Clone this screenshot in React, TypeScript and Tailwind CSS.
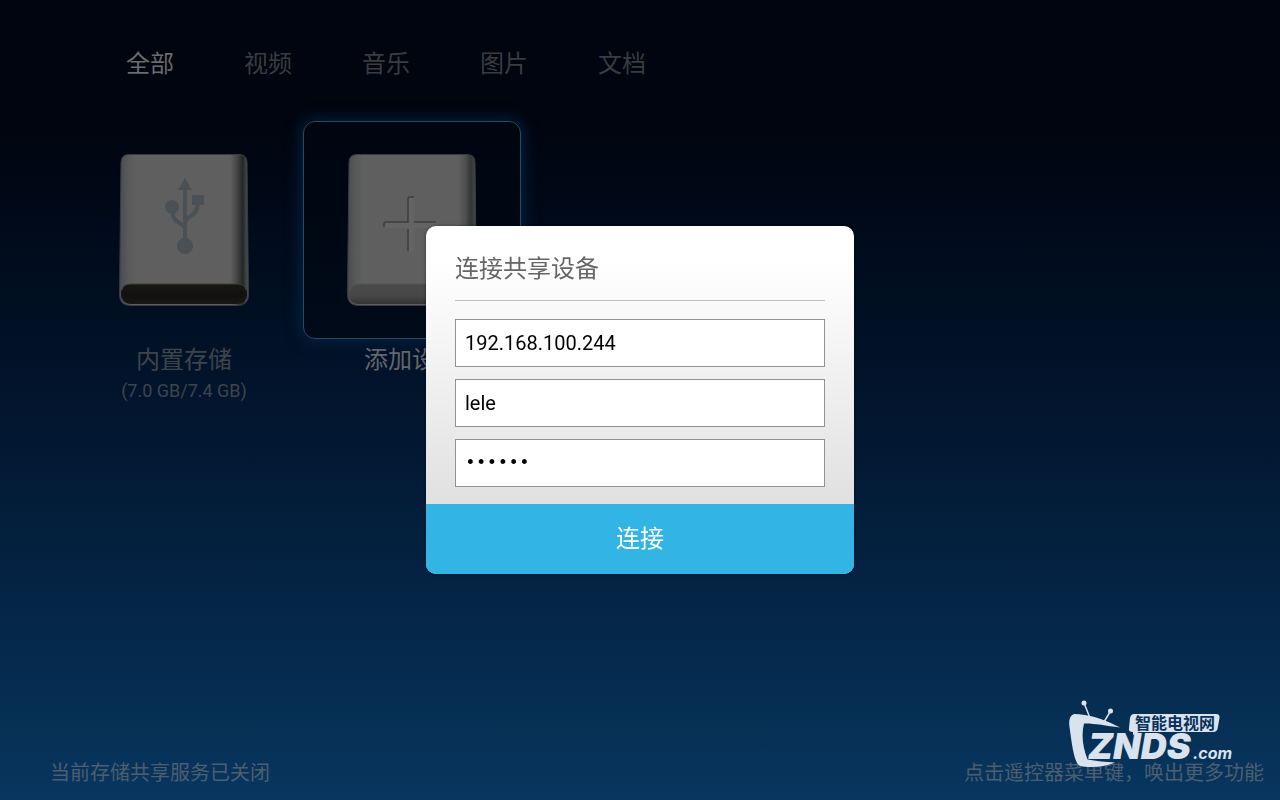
import { useState } from "react";

const tabs = ["全部", "视频", "音乐", "图片", "文档"];

function DriveBody({ id, dark }: { id: string; dark?: boolean }) {
  return (
    <>
      <defs>
        <linearGradient id={`${id}-face`} x1="0" x2="1" y1="0" y2="0">
          <stop offset="0" stopColor="#484b52" />
          <stop offset="0.06" stopColor="#575859" />
          <stop offset="0.12" stopColor="#5f5f5f" />
          <stop offset="0.86" stopColor="#5f5f5f" />
          <stop offset="0.91" stopColor={dark ? "#454645" : "#505050"} />
          <stop offset="0.955" stopColor={dark ? "#232827" : "#333736"} />
          <stop offset="0.98" stopColor="#3c403f" />
          <stop offset="1" stopColor="#505252" />
        </linearGradient>
        <linearGradient id={`${id}-lip`} x1="0" x2="0" y1="0" y2="1">
          <stop offset="0" stopColor={dark ? "#181714" : "#4a4a4a"} />
          <stop offset="0.6" stopColor={dark ? "#12110f" : "#474747"} />
          <stop offset="1" stopColor={dark ? "#171716" : "#333333"} />
        </linearGradient>
      </defs>
      <path
        d="M10 .5h110q8 0 8 8l1.5 132q0 11-11 11h-107q-11 0-11-11L2 8.5q0-8 8-8z"
        fill={`url(#${id}-face)`}
        stroke="#383c40"
      />
      <rect x="2" y="130" width="126" height="20" rx="9" fill={`url(#${id}-lip)`} />
      <path d="M3 136q1-6 8-6h108q7 0 8 6" fill="none" stroke={dark ? "#3d3d3b" : "#555555"} />
    </>
  );
}

function UsbDrive() {
  return (
    <svg viewBox="0 0 130 152" className="h-[152px] w-[130px]" aria-hidden="true">
      <DriveBody id="usb" dark />
      <g fill="#4b5054" stroke="#4b5054">
        <path d="M66 24l7 12H59z" stroke="none" />
        <path d="M66 34v54M66 75c-1-7-12-5-13-18M66 68c2-7 12-5 13-19" fill="none" strokeWidth="4" />
        <circle cx="66" cy="92" r="8" stroke="none" />
        <circle cx="53" cy="53" r="7" stroke="none" />
        <path d="M73 41h12v10H73z" stroke="none" />
      </g>
    </svg>
  );
}

function AddDrive() {
  return (
    <svg viewBox="0 0 130 152" className="h-[152px] w-[130px]" aria-hidden="true">
      <DriveBody id="add" />
      <path
        d="M61 45q0-2 2-2h2q2 0 2 2v23h22q2 0 2 2v2q0 2-2 2H67v22q0 2-2 2h-2q-2 0-2-2V74H39q-2 0-2-2v-2q0-2 2-2h22z"
        fill="#646464"
      />
      <path d="M67 43h-4q-2 0-2 2v23H39q-2 0-2 2v3M67 68h22M61 75v22" fill="none" stroke="#3e3e3e" strokeWidth="1.5" />
    </svg>
  );
}

function Watermark() {
  return (
    <svg viewBox="0 0 170 72" className="h-[72px] w-[170px]" role="img" aria-label="智能电视网 ZNDS.com">
      <g fill="#d9e3ed">
        <circle cx="16" cy="3" r="2.5" />
        <circle cx="42.5" cy="11" r="2.5" />
        <path d="M16 3L22 18M42.500 11L36 22" stroke="#d9e3ed" strokeWidth="1.5" />
        <path d="M6 14C20 14 36 19 52 27.500C37 25.500 24 23 16 23.500C13 36 15 48 19.500 59.500C28 61 38 62 47 62.500C37 67 22 68 12 66C6 63 4 45 1.500 27Q0 16 6 14z" />
        <path d="M66 14h82q4 0 3.500 4l-2 11q-1 3-4 3H71l-6 3v-3q-5 0-4-4l1-10q1-4 4-4z" />
        <text x="20" y="59" className="font-['Inter'] text-[36px] font-black italic">
          ZNDS
        </text>
        <text x="125" y="59" className="font-['Inter'] text-[16px] font-bold italic">
          .com
        </text>
      </g>
      <text x="67" y="29" fill="#0a315b" className="font-['Noto_Sans_CJK_SC',sans-serif] text-[16px] font-bold">
        智能电视网
      </text>
    </svg>
  );
}

const fieldClass = "block h-12 w-full border border-[#929292] bg-white px-[9px] pb-px text-black outline-none";
const textFont = "font-['Roboto','Noto_Sans_CJK_SC',sans-serif] text-[20px]";
const secretFont = "font-['Liberation_Mono',monospace] text-[18px]";

export default function App() {
  const [active, setActive] = useState(0);
  const [address, setAddress] = useState("192.168.100.244");
  const [user, setUser] = useState("lele");
  const [password, setPassword] = useState("123456");

  return (
    <div className="relative flex min-h-screen flex-col bg-linear-to-b from-[#00050f] from-15% via-[#02152d] via-50% to-[#08365f] font-['Roboto','Noto_Sans_CJK_SC',sans-serif]">
      <nav className="flex gap-[70px] pt-12 pl-[126px]">
        {tabs.map((tab, i) => (
          <button
            key={tab}
            type="button"
            onClick={() => setActive(i)}
            className={
              i === active
                ? "text-[24px] leading-8 text-[#6a6b6d]"
                : "text-[24px] leading-8 text-[#393c40]"
            }
          >
            {tab}
          </button>
        ))}
      </nav>

      <main className="flex grow gap-[10px] pt-[41px] pl-[75px]">
        <button type="button" className="flex w-[218px] flex-col items-center self-start">
          <span className="flex h-[218px] w-full items-center justify-center">
            <UsbDrive />
          </span>
          <span className="mt-[5px] text-[24px] leading-8 text-[#3e444c]">内置存储</span>
          <span className="text-[18px] leading-[30px] text-[#3e444c]">(7.0 GB/7.4 GB)</span>
        </button>
        <button type="button" className="flex w-[218px] flex-col items-center self-start">
          <span className="flex h-[218px] w-full items-center justify-center rounded-xl border border-[#2a4a5e] bg-[#000610]/60 shadow-[0_0_16px_1px_#05264a]">
            <AddDrive />
          </span>
          <span className="mt-[5px] text-[24px] leading-8 text-[#64676b]">添加设备</span>
        </button>
      </main>

      <footer className="flex justify-between pr-4 pb-[11px] pl-[50px] text-[20px] leading-8 text-[#4c5f70]">
        <p>当前存储共享服务已关闭</p>
        <p>点击遥控器菜单键，唤出更多功能</p>
      </footer>

      <div className="absolute right-[42px] bottom-[28px]">
        <Watermark />
      </div>

      <div className="fixed inset-0 flex items-center justify-center">
        <form
          role="dialog"
          aria-labelledby="dialog-title"
          onSubmit={(e) => e.preventDefault()}
          className="w-[428px] overflow-hidden rounded-[10px] bg-linear-to-b from-white from-10% to-[#d8d8d8] shadow-[0_0_3px_#00000080]"
        >
          <div className="px-[29px] pb-[17px]">
            <h1
              id="dialog-title"
              className="border-b border-[#bdbdbd] pt-[27px] pb-[15px] text-[24px] leading-8 text-[#666666]"
            >
              连接共享设备
            </h1>
            <div className="flex flex-col gap-3 pt-[18px]">
              <input
                aria-label="地址"
                value={address}
                onChange={(e) => setAddress(e.target.value)}
                className={`${fieldClass} ${textFont}`}
              />
              <input
                aria-label="用户名"
                value={user}
                onChange={(e) => setUser(e.target.value)}
                className={`${fieldClass} ${textFont}`}
              />
              <input
                aria-label="密码"
                type="password"
                value={password}
                onChange={(e) => setPassword(e.target.value)}
                className={`${fieldClass} ${secretFont}`}
              />
            </div>
          </div>
          <button type="submit" className="block h-[70px] w-full bg-[#32b4e4] text-[24px] leading-8 text-white">
            连接
          </button>
        </form>
      </div>
    </div>
  );
}
